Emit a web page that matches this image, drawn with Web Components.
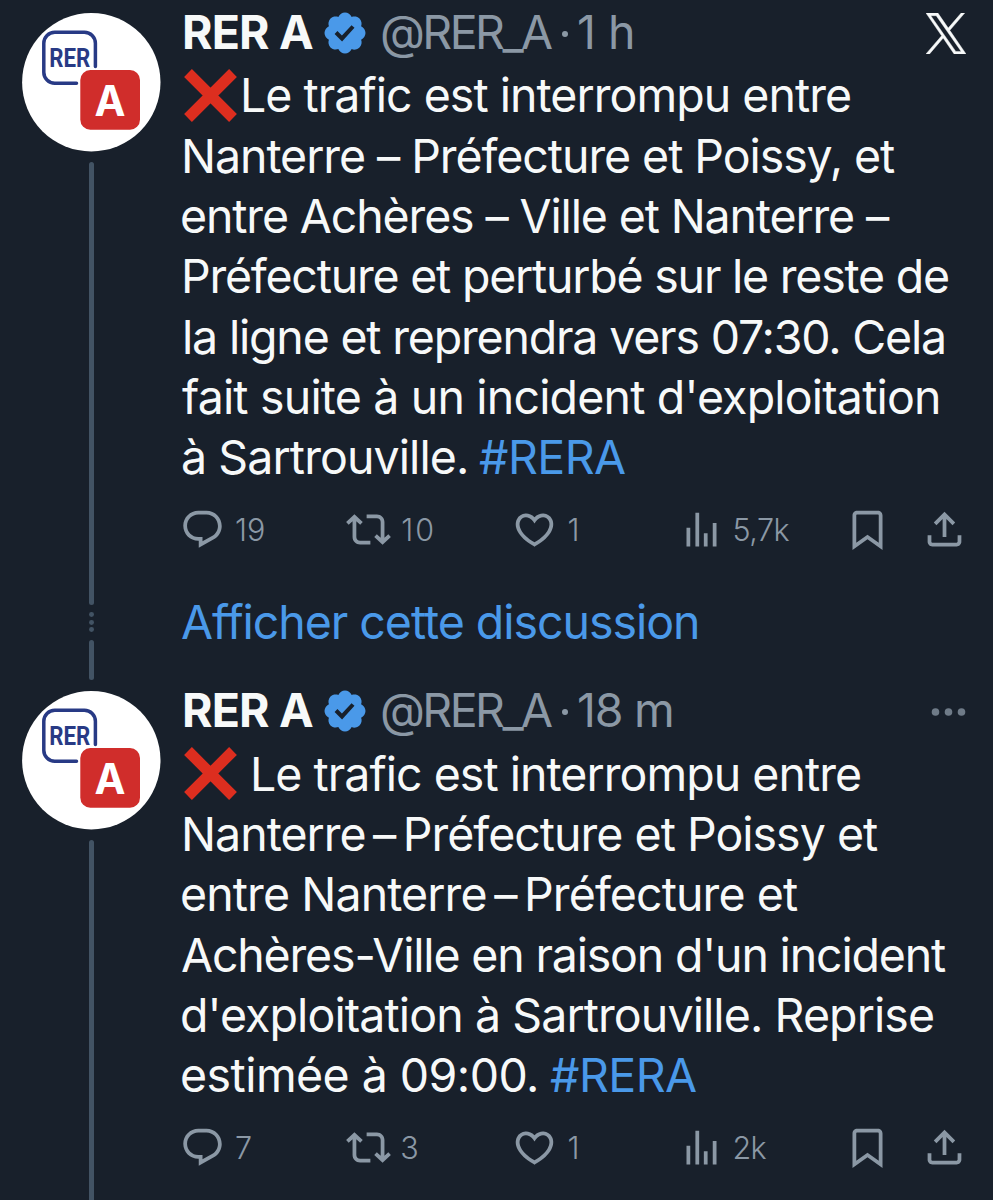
<!DOCTYPE html>
<html lang="fr">
<head>
<meta charset="utf-8">
<title>RER A</title>
<style>
    body{
        margin:0;
        height:1200px;
        overflow:hidden;
        background:#18202b;
        color:#f7f9f9;
        font-family:Inter, "Liberation Sans", sans-serif;

        --muted:#8b98a5;
        --link:#4a99e9;
        --rail:#425364;
    }
</style>
</head>
<body>

<thread-view>

    <tweet-post>
        <tweet-header slot="header" time="1 h" time-width="53">
            <x-icon slot="corner" name="logo"></x-icon>
        </tweet-header>
        <text-line><x-icon name="cross"></x-icon><fit-text width="606" style="margin-left:6px">Le trafic est interrompu entre</fit-text></text-line>
        <text-line><fit-text width="710" style="margin-left:3px">Nanterre – Préfecture et Poissy, et</fit-text></text-line>
        <text-line><fit-text width="708">entre Achères – Ville et Nanterre –</fit-text></text-line>
        <text-line><fit-text width="763" style="margin-left:3px">Préfecture et perturbé sur le reste de</fit-text></text-line>
        <text-line><fit-text width="759" style="margin-left:3px">la ligne et reprendra vers 07:30. Cela</fit-text></text-line>
        <text-line><fit-text width="756">fait suite à un incident d'exploitation</fit-text></text-line>
        <text-line><fit-text width="283" style="margin-left:1px">à Sartrouville.</fit-text><fit-text class="tag" width="146" style="margin-left:13px">#RERA</fit-text></text-line>
        <tweet-actions slot="actions" replies="19" reposts="10" likes="1" views="5,7k" widths="28 30 10 55"></tweet-actions>
    </tweet-post>

    <show-more><fit-text width="515">Afficher cette discussion</fit-text></show-more>

    <tweet-post>
        <tweet-header slot="header" time="18 m" time-width="93">
            <x-icon slot="corner" name="dots"></x-icon>
        </tweet-header>
        <text-line><x-icon name="cross"></x-icon><fit-text width="606" style="margin-left:16px">Le trafic est interrompu entre</fit-text></text-line>
        <text-line><fit-text width="693" style="margin-left:3px">Nanterre&#8201;–&#8201;Préfecture et Poissy et</fit-text></text-line>
        <text-line><fit-text width="616">entre Nanterre&#8201;–&#8201;Préfecture et</fit-text></text-line>
        <text-line><fit-text width="764">Achères-Ville en raison d'un incident</fit-text></text-line>
        <text-line><fit-text width="751">d'exploitation à Sartrouville. Reprise</fit-text></text-line>
        <text-line><fit-text width="354">estimée à 09:00.</fit-text><fit-text class="tag" width="146" style="margin-left:14px">#RERA</fit-text></text-line>
        <tweet-actions slot="actions" replies="7" reposts="3" likes="1" views="2k" widths="13 15 10 32"></tweet-actions>
    </tweet-post>

</thread-view>

<script>

// ---------- icons : [width, height, viewBox, content] ----------

const ICONS = {
    reply: [45, 45, '0 0 24 24', '<path d="M1.751 10c0-4.42 3.584-8 8.005-8h4.366c4.49 0 8.129 3.64 8.129 8.13 0 2.96-1.607 5.68-4.196 7.11l-8.054 4.46v-3.69h-.067c-4.49.1-8.183-3.51-8.183-8.01zm8.005-6c-3.317 0-6.005 2.69-6.005 6 0 3.37 2.77 6.08 6.138 6.01l.351-.01h1.761v2.3l5.087-2.81c1.951-1.08 3.163-3.13 3.163-5.36 0-3.39-2.744-6.13-6.129-6.13H9.756z"/>'],
    repost: [45, 45, '0 0 24 24', '<path d="M4.5 3.88l4.432 4.14-1.364 1.46L5.5 7.55V16c0 1.1.896 2 2 2H13v2H7.5c-2.209 0-4-1.79-4-4V7.55L1.432 9.48.068 8.02 4.5 3.88zM16.5 6H11V4h5.5c2.209 0 4 1.79 4 4v8.45l2.068-1.93 1.364 1.46-4.432 4.14-4.432-4.14 1.364-1.46 2.068 1.93V8c0-1.1-.896-2-2-2z"/>'],
    like: [45, 45, '0 0 24 24', '<path d="M16.697 5.5c-1.222-.06-2.679.51-3.89 2.16l-.805 1.09-.806-1.09C9.984 6.01 8.526 5.44 7.304 5.5c-1.243.07-2.349.78-2.91 1.91-.552 1.12-.633 2.78.479 4.82 1.074 1.97 3.257 4.27 7.129 6.61 3.87-2.34 6.052-4.64 7.126-6.61 1.111-2.04 1.03-3.7.477-4.82-.561-1.13-1.666-1.84-2.908-1.91zm4.187 7.69c-1.351 2.48-4.001 5.12-8.379 7.67l-.503.3-.504-.3c-4.379-2.55-7.029-5.19-8.382-7.67-1.36-2.5-1.41-4.86-.514-6.67.887-1.79 2.647-2.91 4.601-3.01 1.651-.09 3.368.56 4.798 2.01 1.429-1.45 3.146-2.1 4.796-2.01 1.954.1 3.714 1.22 4.601 3.01.896 1.81.846 4.17-.514 6.67z"/>'],
    views: [45, 45, '0 0 24 24', '<path d="M8.75 21V3h2v18h-2zM18 21V8.5h2V21h-2zM4 21l.004-10h2L6 21H4zm9.248 0v-7h2v7h-2z"/>'],
    bookmark: [45, 45, '0 0 24 24', '<path d="M4 4.5C4 3.12 5.119 2 6.5 2h11C18.881 2 20 3.12 20 4.5v18.44l-8-5.71-8 5.71V4.5zM6.5 4c-.276 0-.5.22-.5.5v14.56l6-4.29 6 4.29V4.5c0-.28-.224-.5-.5-.5h-11z"/>'],
    share: [45, 45, '0 0 24 24', '<path d="M12 2.59l5.7 5.7-1.41 1.42L13 6.41V16h-2V6.41l-3.3 3.3-1.41-1.42L12 2.59zM21 15l-.02 3.51c0 1.38-1.12 2.49-2.5 2.49H5.5C4.11 21 3 19.88 3 18.5V15h2v3.5c0 .28.22.5.5.5h12.98c.28 0 .5-.22.5-.5L19 15h2z"/>'],
    verified: [48, 48, '0 0 22 22', '<path fill="#4a99e9" d="M20.396 11c-.018-.646-.215-1.275-.57-1.816-.354-.54-.852-.972-1.438-1.246.223-.607.27-1.264.14-1.897-.131-.634-.437-1.218-.882-1.687-.47-.445-1.053-.75-1.687-.882-.633-.13-1.29-.083-1.897.14-.273-.587-.704-1.086-1.245-1.44S11.647 1.62 11 1.604c-.646.017-1.273.213-1.813.568s-.969.854-1.24 1.44c-.608-.223-1.267-.272-1.902-.14-.635.13-1.22.436-1.69.882-.445.47-.749 1.055-.878 1.688-.13.633-.08 1.29.144 1.896-.587.274-1.087.705-1.443 1.245-.356.54-.555 1.17-.574 1.817.02.647.218 1.276.574 1.817.356.54.856.972 1.443 1.245-.224.606-.274 1.263-.144 1.896.13.634.433 1.218.877 1.688.47.443 1.054.747 1.687.878.633.132 1.29.084 1.897-.136.274.586.705 1.084 1.246 1.439.54.354 1.17.551 1.816.569.647-.016 1.276-.213 1.817-.567s.972-.854 1.245-1.44c.604.239 1.266.296 1.903.164.636-.132 1.22-.447 1.68-.907.46-.46.776-1.044.908-1.681s.075-1.299-.165-1.903c.586-.274 1.084-.705 1.439-1.246.354-.54.551-1.17.569-1.816zM9.662 14.85l-3.429-3.428 1.293-1.302 2.072 2.072 4.4-4.794 1.347 1.246z"/>'],
    logo: [40, 41, '0 0 1200 1227', '<path fill="#f7f9f9" stroke="#f7f9f9" stroke-width="14" d="M714.163 519.284L1160.89 0H1055.03L667.137 450.887L357.328 0H0L468.492 681.821L0 1226.37H105.866L515.491 750.218L842.672 1226.37H1200L714.137 519.284H714.163ZM569.165 687.828L521.697 619.934L144.011 79.6944H306.615L611.412 515.685L658.88 583.579L1055.08 1150.3H892.476L569.165 687.854V687.828Z"/>'],
    dots: [40, 41, '0 0 40 41', '<g fill="#6f7b88"><circle cx="9.5" cy="21" r="3.8"/><circle cx="22.5" cy="21" r="3.8"/><circle cx="35.5" cy="21" r="3.8"/></g>'],
    cross: [53, 53, '0 0 53 53', '<path d="M4 4L49 49M49 4L4 49" fill="none" stroke="#dd2e1f" stroke-width="11"/>']
};


class XIcon extends HTMLElement {

    constructor() {
        super();
        this.attachShadow({ mode: 'open' });
    }

    connectedCallback() {

        const [w, h, box, content] = ICONS[this.getAttribute('name')];

        this.shadowRoot.innerHTML = `
        <style>
            :host{ display:block; flex:none; }
            svg{ display:block; fill:currentColor; }
        </style>
        <svg width="${w}" height="${h}" viewBox="${box}" aria-hidden="true">${content}</svg>
        `;
    }
}


// Text whose ink starts at the left edge of its box and is tracked to the given width
class FitText extends HTMLElement {

    constructor() {
        super();
        this.attachShadow({ mode: 'open' });
    }

    connectedCallback() {

        this.shadowRoot.innerHTML = `
        <style>
            :host{ display:block; flex:none; white-space:nowrap; }
            :host(.tag){ color:var(--link); }
            span{ display:block; }
        </style>
        <span><slot></slot></span>
        `;

        // children are complete once the parser has moved on
        queueMicrotask(() => this.fit());
        document.addEventListener('DOMContentLoaded', () => this.fit());
    }

    fit() {

        const text = this.textContent;
        const width = Number(this.getAttribute('width'));

        if (!text || !width) return;

        const style = getComputedStyle(this);
        const ctx = FitText.canvas.getContext('2d');

        ctx.font = `${style.fontWeight} ${style.fontSize} ${style.fontFamily}`;

        const m = ctx.measureText(text);
        const ink = m.actualBoundingBoxLeft + m.actualBoundingBoxRight;
        const tracking = text.length > 1 ? (width - ink) / (text.length - 1) : 0;

        const span = this.shadowRoot.querySelector('span');

        this.style.width = width + 'px';
        span.style.letterSpacing = tracking + 'px';
        span.style.marginLeft = m.actualBoundingBoxLeft + 1 + 'px';
    }
}

FitText.canvas = document.createElement('canvas');


class TextLine extends HTMLElement {

    constructor() {
        super();
        this.attachShadow({ mode: 'open' }).innerHTML = `
        <style>
            :host{
                display:flex;
                align-items:center;
                height:60.3px;
                font-size:46.5px;
                line-height:60px;
            }
            ::slotted(x-icon){ margin-left:3px; }
        </style>
        <slot></slot>
        `;
    }
}


class RerAvatar extends HTMLElement {

    constructor() {
        super();
        this.attachShadow({ mode: 'open' }).innerHTML = `
        <style>
            :host{ display:block; width:139px; height:139px; flex:none; }
            svg{ display:block; }
        </style>
        <svg width="139" height="139" viewBox="0 0 139 139">
            <circle cx="69.3" cy="69.2" r="69.2" fill="#fff"/>
            <path d="M73.4 53.5V30.2a11 11 0 0 0-11-11H32.8a11 11 0 0 0-11 11v29a11 11 0 0 0 11 11H54.5" fill="none" stroke="#283a85" stroke-width="3.5" stroke-linecap="round"/>
            <text x="27.2" y="53.8" font-family="Roboto" font-weight="700" font-size="25" fill="#283a85" textLength="41" lengthAdjust="spacingAndGlyphs">RER</text>
            <rect x="58.3" y="57" width="59.7" height="59.7" rx="10" fill="#d02d2b"/>
            <text x="88.1" y="102.7" font-family="Inter" font-weight="700" font-size="43" fill="#fff" text-anchor="middle" textLength="31" lengthAdjust="spacingAndGlyphs">A</text>
        </svg>
        `;
    }
}


class TweetHeader extends HTMLElement {

    constructor() {
        super();
        this.attachShadow({ mode: 'open' });
    }

    connectedCallback() {

        this.shadowRoot.innerHTML = `
        <style>
            :host{
                display:flex;
                align-items:center;
                height:60px;
                font-size:46.5px;
                line-height:60px;
                color:var(--muted);
            }
            .name{ margin-left:3px; color:#f7f9f9; font-weight:700; }
            .badge{ margin:2px 0 0 9px; }
            .handle{ margin-left:12px; }
            .dot{ width:6px; height:6px; margin:3px 0 0 11px; border-radius:50%; background:var(--muted); }
            .time{ margin-left:10px; }
            .corner{ margin:2px 27px 0 auto; }
        </style>
        <fit-text class="name" width="128">RER A</fit-text>
        <x-icon class="badge" name="verified"></x-icon>
        <fit-text class="handle" width="170">@RER_A</fit-text>
        <div class="dot"></div>
        <fit-text class="time" width="${this.getAttribute('time-width')}">${this.getAttribute('time')}</fit-text>
        <div class="corner"><slot name="corner"></slot></div>
        `;
    }
}


class TweetActions extends HTMLElement {

    constructor() {
        super();
        this.attachShadow({ mode: 'open' });
    }

    connectedCallback() {

        const widths = this.getAttribute('widths').split(' ');
        const counts = [['reply', 'replies'], ['repost', 'reposts'], ['like', 'likes'], ['views', 'views']];

        this.shadowRoot.innerHTML = `
        <style>
            :host{
                display:flex;
                margin-left:-1px;
                color:var(--muted);
                font-size:30.5px;
                font-weight:300;
                line-height:46px;
            }
            .action{ display:flex; align-items:center; width:166.2px; height:45px; }
            .action fit-text{ margin-left:10px; }
            .bookmark{ width:77.5px; }
        </style>
        ${counts.map(([icon, attr], i) => `
        <div class="action">
            <x-icon name="${icon}"></x-icon>
            <fit-text width="${widths[i]}">${this.getAttribute(attr)}</fit-text>
        </div>`).join('')}
        <x-icon class="bookmark" name="bookmark"></x-icon>
        <x-icon name="share"></x-icon>
        `;
    }
}


class TweetPost extends HTMLElement {

    constructor() {
        super();
        this.attachShadow({ mode: 'open' }).innerHTML = `
        <style>
            :host{ display:flex; gap:20px; }
            .side{
                display:flex;
                flex-direction:column;
                align-items:center;
                gap:10px;
                padding-top:11px;
            }
            .rail{ width:5px; flex:1; border-radius:3px; background:var(--rail); }
            .main{ flex:1; padding-bottom:53px; }
            .body{ padding:3.3px 0 20px; }
        </style>
        <div class="side">
            <rer-avatar></rer-avatar>
            <div class="rail"></div>
        </div>
        <div class="main">
            <slot name="header"></slot>
            <div class="body"><slot></slot></div>
            <slot name="actions"></slot>
        </div>
        `;
    }
}


class ShowMore extends HTMLElement {

    constructor() {
        super();
        this.attachShadow({ mode: 'open' }).innerHTML = `
        <style>
            :host{
                display:flex;
                gap:20px;
                height:75px;
                color:var(--link);
                font-size:46.5px;
                line-height:60px;
            }
            .side{
                display:flex;
                flex-direction:column;
                align-items:center;
                width:139px;
            }
            i{ width:5px; height:5px; margin-bottom:2.5px; border-radius:50%; background:var(--rail); }
            i:first-child{ margin-top:7px; }
            .rail{ width:5px; height:41px; margin-top:5.5px; border-radius:3px; background:var(--rail); }
            .text{ margin:-13px 0 0; }
        </style>
        <div class="side"><i></i><i></i><i></i><div class="rail"></div></div>
        <div class="text"><slot></slot></div>
        `;
    }
}


class ThreadView extends HTMLElement {

    constructor() {
        super();
        this.attachShadow({ mode: 'open' }).innerHTML = `
        <style>
            :host{ display:block; height:1198px; overflow:hidden; padding:2px 0 0 22px; }
        </style>
        <slot></slot>
        `;
    }
}


customElements.define('x-icon', XIcon);
customElements.define('fit-text', FitText);
customElements.define('text-line', TextLine);
customElements.define('rer-avatar', RerAvatar);
customElements.define('tweet-header', TweetHeader);
customElements.define('tweet-actions', TweetActions);
customElements.define('tweet-post', TweetPost);
customElements.define('show-more', ShowMore);
customElements.define('thread-view', ThreadView);

</script>
</body>
</html>
